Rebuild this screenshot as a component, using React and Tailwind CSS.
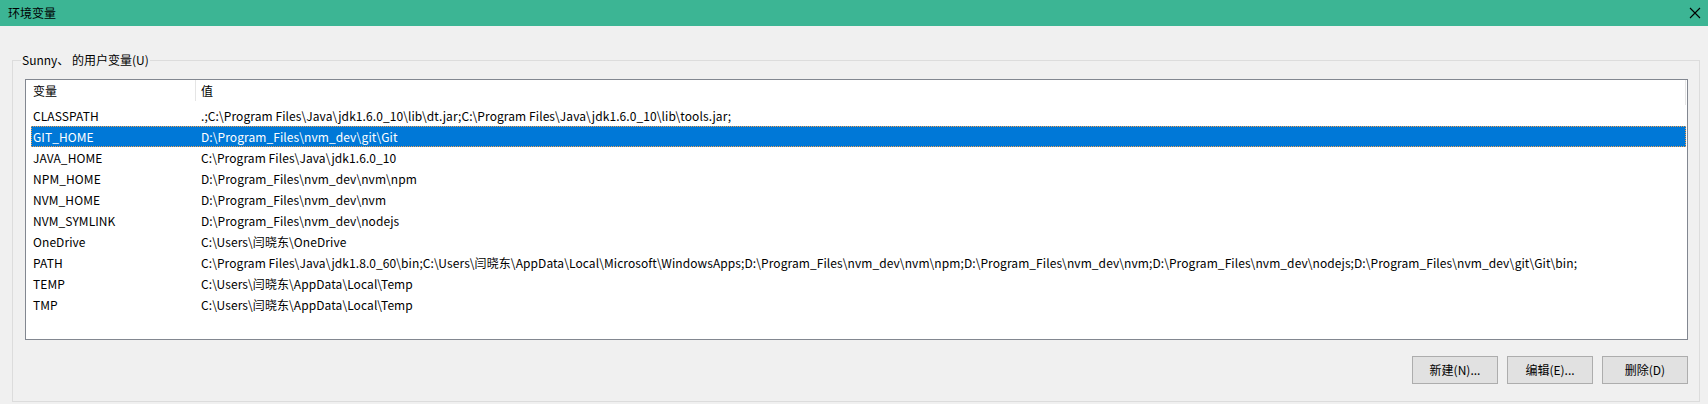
import React from "react"

const rows = [
  ["CLASSPATH", ".;C:\\Program Files\\Java\\jdk1.6.0_10\\lib\\dt.jar;C:\\Program Files\\Java\\jdk1.6.0_10\\lib\\tools.jar;"],
  ["GIT_HOME", "D:\\Program_Files\\nvm_dev\\git\\Git"],
  ["JAVA_HOME", "C:\\Program Files\\Java\\jdk1.6.0_10"],
  ["NPM_HOME", "D:\\Program_Files\\nvm_dev\\nvm\\npm"],
  ["NVM_HOME", "D:\\Program_Files\\nvm_dev\\nvm"],
  ["NVM_SYMLINK", "D:\\Program_Files\\nvm_dev\\nodejs"],
  ["OneDrive", "C:\\Users\\闫晓东\\OneDrive"],
  ["PATH", "C:\\Program Files\\Java\\jdk1.8.0_60\\bin;C:\\Users\\闫晓东\\AppData\\Local\\Microsoft\\WindowsApps;D:\\Program_Files\\nvm_dev\\nvm\\npm;D:\\Program_Files\\nvm_dev\\nvm;D:\\Program_Files\\nvm_dev\\nodejs;D:\\Program_Files\\nvm_dev\\git\\Git\\bin;"],
  ["TEMP", "C:\\Users\\闫晓东\\AppData\\Local\\Temp"],
  ["TMP", "C:\\Users\\闫晓东\\AppData\\Local\\Temp"],
]

const font = { fontFamily: '"Noto Sans CJK SC", "Noto Sans", sans-serif' }

function WinButton({ children }) {
  return (
    <button className="flex h-[28px] w-[86px] items-center justify-center border border-[#adadad] bg-[#e1e1e1] text-[12px] text-black">
      {children}
    </button>
  )
}

export default function App() {
  return (
    <div className="h-[404px] w-[1708px] overflow-hidden bg-[#f0f0f0] text-[12px] text-black" style={font}>
      {/* title bar */}
      <div className="flex h-[26px] items-center justify-between bg-[#3cb594] pl-[8px] pr-[6px]">
        <span className="text-[12px] leading-none">环境变量</span>
        <svg width="12" height="12" viewBox="0 0 12 12" className="mr-[1px]">
          <path d="M1 1 L11 11 M11 1 L1 11" stroke="#000" strokeWidth="1.1" />
        </svg>
      </div>

      {/* group box */}
      <div className="relative ml-[12px] mt-[34px] h-[342px] w-[1688px] border border-[#dcdcdc] pl-[12px] pr-[11px] pt-[18px]">
        <span className="absolute left-[8px] top-[-10px] bg-[#f0f0f0] px-[1px] leading-[18px]">Sunny、 的用户变量(U)</span>

        <div className="h-[261px] w-[1663px] border border-[#828790] bg-white">
          <div className="flex h-[25px] items-start">
            <div className="flex h-[21px] w-[170px] items-center border-r border-[#e5e5e5] pl-[7px]">变量</div>
            <div className="flex h-[21px] flex-1 items-center pl-[5px]">值</div>
            <div className="mr-[1px] h-[25px] w-px bg-[#e5e5e5]" />
          </div>
          <div className="flex flex-col pl-[5px] pr-[1px] tracking-[0.08px]">
            {rows.map(([name, value]) => {
              const sel = name === "GIT_HOME"
              return (
                <div
                  key={name}
                  className={
                    sel
                      ? "flex h-[21px] items-center whitespace-nowrap bg-[#0078d7] text-white outline-1 -outline-offset-1 outline-dotted outline-[#f0a050]"
                      : "flex h-[21px] items-center whitespace-nowrap"
                  }
                >
                  <span className="w-[170px] pl-[2px]">{name}</span>
                  <span>{value}</span>
                </div>
              )
            })}
          </div>
        </div>

        <div className="mt-[16px] flex w-[1663px] justify-end gap-[9px]">
          <WinButton>新建(N)...</WinButton>
          <WinButton>编辑(E)...</WinButton>
          <WinButton>删除(D)</WinButton>
        </div>
      </div>
    </div>
  )
}
